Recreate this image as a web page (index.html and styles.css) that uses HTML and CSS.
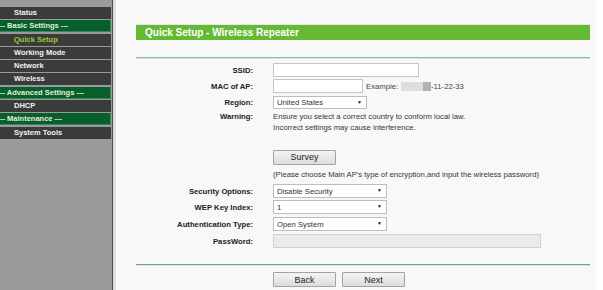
FILE: index.html
```html
<!DOCTYPE html>
<html lang="en">
<head>
    <meta charset="UTF-8">
    <title>Quick Setup - Wireless Repeater</title>
    <link rel="stylesheet" href="styles.css">
</head>
<body>
    <nav class="sidebar">
        <div class="menu-item">Status</div>
        <div class="menu-group">-- Basic Settings ---</div>
        <div class="menu-item active">Quick Setup</div>
        <div class="menu-item">Working Mode</div>
        <div class="menu-item">Network</div>
        <div class="menu-item">Wireless</div>
        <div class="menu-group">-- Advanced Settings ---</div>
        <div class="menu-item">DHCP</div>
        <div class="menu-group">-- Maintenance ---</div>
        <div class="menu-item">System Tools</div>
    </nav>

    <main class="main">
        <div class="title-bar">Quick Setup - Wireless Repeater</div>
        <div class="divider"></div>

        <form class="setup-form">
            <div class="row">
                <label class="label">SSID:</label>
                <input type="text" class="field ssid">
            </div>
            <div class="row">
                <label class="label">MAC of AP:</label>
                <input type="text" class="field mac">
                <span class="example">Example: <span class="blur"><span class="blur-dark"></span></span>-11-22-33</span>
            </div>
            <div class="row">
                <label class="label">Region:</label>
                <span class="select region"><select><option>United States</option></select></span>
            </div>
            <div class="row warning-row">
                <label class="label">Warning:</label>
                <p class="text">Ensure you select a correct country to conform local law.<br>Incorrect settings may cause interference.</p>
            </div>

            <div class="row survey-row">
                <span class="label"></span>
                <button type="button" class="btn">Survey</button>
            </div>
            <div class="row note-row">
                <span class="label"></span>
                <p class="text">(Please choose Main AP's type of encryption,and input the wireless password)</p>
            </div>

            <div class="row security-row">
                <label class="label">Security Options:</label>
                <span class="select wide"><select><option>Disable Security</option></select></span>
            </div>
            <div class="row">
                <label class="label">WEP Key Index:</label>
                <span class="select wide"><select><option>1</option></select></span>
            </div>
            <div class="row spaced">
                <label class="label">Authentication Type:</label>
                <span class="select wide"><select><option>Open System</option></select></span>
            </div>
            <div class="row spaced">
                <label class="label">PassWord:</label>
                <input type="text" class="field password" disabled>
            </div>

            <div class="divider bottom"></div>

            <div class="row buttons">
                <span class="label"></span>
                <button type="button" class="btn">Back</button>
                <button type="button" class="btn">Next</button>
            </div>
        </form>
    </main>
</body>
</html>
```

FILE: styles.css
```css
body {
    margin: 0;
    padding: 0;
    display: flex;
    min-height: 290px;
    background: #fff;
    font-family: 'Liberation Sans', Arial, sans-serif;
    color: #333;
}

.sidebar {
    width: 111px;
    padding-top: 7px;
    padding-right: 1px;
    background: #9a9a9a;
    border-right: 1px solid #4f4f4f;
    flex-shrink: 0;
}

.menu-item,
.menu-group {
    height: 12px;
    line-height: 12px;
    margin-bottom: 1.3px;
    font-size: 7.5px;
    font-weight: bold;
    color: #f2f2f2;
    white-space: nowrap;
}

.menu-item {
    background: #3b3b3b;
    padding-left: 14px;
}

.menu-item.active {
    color: #99cc33;
}

.menu-group {
    background: #07602c;
    box-shadow: inset -1px -1px 0 #3f8458;
    color: #e4ecdc;
}

.main {
    flex: 1;
    margin-right: 7px;
    padding: 25px 6px 0 20px;
    background: #f8f8f8;
    border-left: 3px solid #dedede;
}

.title-bar {
    height: 15px;
    line-height: 15px;
    padding-left: 9px;
    background: #66b933;
    color: #fff;
    font-size: 10px;
    font-weight: bold;
    border-top: 1px solid #e6e6e6;
    margin-top: -1px;
}

.divider {
    margin-top: 17px;
    border-top: 1px solid #8fbea2;
    border-bottom: 1px solid #d2e4d8;
}

.divider.bottom {
    margin-top: 16px;
    border-top-color: #6ea682;
}

.setup-form {
    padding-top: 2px;
}

.row {
    display: flex;
    align-items: center;
    height: 14px;
    margin-top: 2px;
    font-size: 7.7px;
}

.label {
    width: 117px;
    margin-right: 20px;
    text-align: right;
    font-weight: bold;
    color: #222;
    flex-shrink: 0;
}

.field {
    height: 14px;
    box-sizing: border-box;
    margin: 0;
    padding: 0 3px;
    border: 1px solid #c4c4c4;
    background: #fff;
    font: inherit;
}

.ssid {
    width: 146px;
}

.mac {
    width: 90px;
}

.password {
    width: 268px;
    background: #ebebe7;
    border-color: #d0d0d0;
}

.example {
    margin-left: 3px;
    display: flex;
    align-items: center;
    color: #444;
}

.blur {
    display: inline-block;
    width: 30px;
    height: 9px;
    margin-left: 3px;
    background: #dedede;
    position: relative;
}

.blur-dark {
    position: absolute;
    right: 0;
    top: 0;
    width: 8px;
    height: 9px;
    background: #b2b2b2;
}

.select {
    position: relative;
    display: inline-block;
    height: 14px;
}

.select select {
    appearance: none;
    -webkit-appearance: none;
    width: 100%;
    height: 100%;
    margin: 0;
    padding: 0 3px;
    border: 1px solid #bdbdbd;
    border-radius: 0;
    background: #fff;
    font: inherit;
    color: #333;
}

.select::after {
    content: "\25BC";
    position: absolute;
    right: 5px;
    top: 3px;
    font-size: 5px;
    color: #111;
    pointer-events: none;
}

.region {
    width: 94px;
    height: 13px;
}

.wide {
    width: 114px;
}

.text {
    margin: 0;
    color: #3a3340;
    line-height: 11px;
}

.warning-row {
    height: 22px;
    align-items: flex-start;
}

.warning-row .label {
    line-height: 11px;
}

.survey-row {
    margin-top: 17px;
}

.note-row {
    height: 11px;
    margin-top: 5px;
}

.security-row {
    margin-top: 4px;
}

.spaced {
    margin-top: 3px;
}

.btn {
    width: 63px;
    height: 15px;
    margin: 0 6px 0 0;
    padding: 0;
    border: 1px solid #a3a3a3;
    border-radius: 1px;
    background: linear-gradient(#f4f4f4, #dcdcdc);
    font-family: 'Liberation Sans', Arial, sans-serif;
    font-size: 9px;
    color: #222;
}

.buttons {
    margin-top: 6px;
    height: 15px;
}
```
